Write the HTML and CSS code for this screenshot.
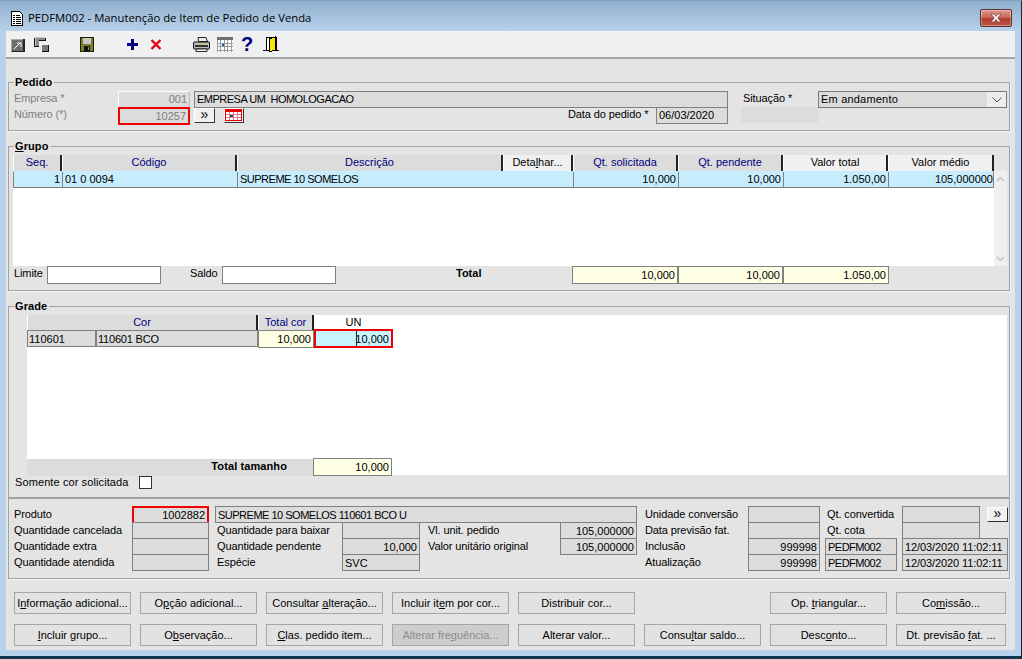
FILE: index.html
```html
<!DOCTYPE html>
<html lang="pt">
<head>
<meta charset="utf-8">
<title>PEDFM002</title>
<link rel="stylesheet" href="styles.css">
</head>
<body>
<div class="window">
  <header class="titlebar">
    <svg class="title-icon" width="14" height="15" viewBox="0 0 14 15" shape-rendering="crispEdges"><path d="M1.5.5h8l3 3v11h-11z" fill="#fff" stroke="#000"/><path d="M3 4h2v1H3zM6 4h4v1H6zM3 6h2v1H3zM6 6h5v1H6zM3 8h2v1H3zM6 8h5v1H6zM3 10h2v1H3zM6 10h5v1H6zM3 12h2v1H3zM6 12h5v1H6z" fill="#000"/></svg>
    <span class="title-text">PEDFM002 - Manutenção de Item de Pedido de Venda</span>
    <span class="close"><svg width="14" height="10" viewBox="0 0 14 10"><path d="M2 1h3l2 2.500L9 1h3L8.700 5 12 9H9L7 6.500 5 9H2l3.300-4z" fill="#fff" stroke="#6b2a24" stroke-width=".6"/></svg></span>
  </header>
  <div class="client">
    <nav class="toolbar">
      <svg class="ti t1" width="14" height="14" viewBox="0 0 14 14" shape-rendering="crispEdges"><path d="M0 1h13v13H0z" fill="#6f6f6f"/><path d="M0 1h12v1H1v11H0z" fill="#a8a8a8"/><path d="M12 1h2v13H1v-1h11z" fill="#222"/><path d="M3 11l6-6M6 5h4v4" stroke="#fff" fill="none" stroke-width="1" shape-rendering="auto"/></svg>
      <svg class="ti t2" width="15" height="15" viewBox="0 0 15 15" shape-rendering="crispEdges"><path d="M1 0h10v4H5v6H1z" fill="#8a8a8a"/><path d="M1 0h10v1H2v9H1z" fill="#c4c4c4"/><path d="M5 4h7V1h-1v2H5zM0 10h5V9H1V1H0z" fill="#111"/><path d="M8 8h6v6H8z" fill="#777"/><path d="M14 8h1v7H8v-1h6z" fill="#111"/></svg>
      <svg class="ti t3" width="14" height="15" viewBox="0 0 14 15" shape-rendering="crispEdges"><path d="M0 0h14v15H0z" fill="#1d1d00"/><path d="M1 1h12v13H1z" fill="#7d7d2a"/><path d="M3 1h8v6H3z" fill="#c8c8c8"/><path d="M4 9h6v5H4z" fill="#111"/><path d="M8 10h1v3H8z" fill="#999"/></svg>
      <svg class="ti t4" width="11" height="11" viewBox="0 0 11 11" shape-rendering="crispEdges"><path d="M4 0h3v4h4v3H7v4H4V7H0V4h4z" fill="#000080"/></svg>
      <svg class="ti t5" width="12" height="11" viewBox="0 0 12 11"><path d="M1.500 1l9 9M10.500 1l-9 9" stroke="#e3000f" stroke-width="2.400" fill="none"/></svg>
      <svg class="ti t6" width="17" height="15" viewBox="0 0 17 15"><path d="M5 .5h8l1.500 4h-9z" fill="#eee" stroke="#222"/><path d="M1 5h15a.5.500 0 0 1 .5.500V11a1 1 0 0 1-1 1H1.500a1 1 0 0 1-1-1V6z" fill="#bdbdbd" stroke="#111"/><path d="M2 8h13v2H2z" fill="#333"/><path d="M3 12h11v2.500H3z" fill="#fff" stroke="#222"/><path d="M8 6h3v1H8z" fill="#d8d800"/></svg>
      <svg class="ti t7" width="16" height="15" viewBox="0 0 16 15" shape-rendering="crispEdges"><path d="M0 0h16v3H0z" fill="#6f6f6f"/><path d="M0 3h16v12H0z" fill="#fff"/><path d="M0 3v12M3.500 3v12M7 3v12M10.500 3v12M14 3v12M0 6h16M0 9.500h16M0 13h16" stroke="#9a9a9a" fill="none"/><path d="M5 7h2v2H5z" fill="#0a5aa8"/></svg>
      <span class="ti help">?</span>
      <svg class="ti t9" width="16" height="17" viewBox="0 0 16 17" shape-rendering="crispEdges"><path d="M3 1h10v13H3z" fill="#fff" stroke="#000" stroke-width="1"/><path d="M6 3l6-2v13l-6 2z" fill="#f7e600" stroke="#000"/><path d="M0 14h6v1H0zM12 14h4v1h-4z" fill="#000"/></svg>
    </nav>

    <section class="group pedido">
      <span class="legend">Pedido</span>
      <div class="pedido-grid">
        <span class="lbl dim">Empresa *</span>
        <span class="f soft dim r">001</span>
        <span class="f desc-emp caps">EMPRESA UM&nbsp; HOMOLOGACAO</span>
        <span class="lbl sit">Situação *</span>
        <span class="f select">Em andamento<span class="chev"><svg width="10" height="6" viewBox="0 0 10 6"><path d="M.5.500L5 5 9.500.500" stroke="#555" fill="none"/></svg></span></span>

        <span class="lbl dim">Número (*)</span>
        <span class="f red dim r">10257</span>
        <button class="mini c-more" type="button">»</button>
        <button class="mini c-cal" type="button" aria-label="Calendário"><svg width="17" height="12" viewBox="0 0 17 12" shape-rendering="crispEdges"><path d="M0 0h17v12H0z" fill="#f00000"/><path d="M1 3h15v8H1z" fill="#fff"/><path d="M4.500 3v8M8.500 3v8M12.500 3v8M1 5.500h15M1 8.500h15" stroke="#e08080"/><path d="M5 6h3v2H5z" fill="#0a5aa8"/></svg></button>
        <span class="lbl c-data">Data do pedido *</span>
        <span class="f c-date">06/03/2020</span>
        <span class="blank c-blank"></span>
      </div>
    </section>

    <section class="group grupo">
      <span class="legend"><u>G</u>rupo</span>
      <div class="g-cols g-head">
        <span class="h req">Seq.</span>
        <span class="h req">Código</span>
        <span class="h req">Descrição</span>
        <span class="h">Deta<u>l</u>har...</span>
        <span class="h req">Qt. solicitada</span>
        <span class="h req">Qt. pendente</span>
        <span class="h">Valor total</span>
        <span class="h">Valor médio</span>
      </div>
      <div class="g-body">
        <div class="g-rows">
          <div class="g-cols g-row">
            <span class="r">1</span>
            <span>01 0 0094</span>
            <span class="nb caps">SUPREME 10 SOMELOS</span>
            <span></span>
            <span class="r">10,000</span>
            <span class="r">10,000</span>
            <span class="r">1.050,00</span>
            <span class="r">105,000000</span>
          </div>
        </div>
        <div class="scroll">
          <svg width="9" height="6" viewBox="0 0 9 6"><path d="M1 5l3.500-3.500L8 5" stroke="#c2c2c2" stroke-width="1.500" fill="none"/></svg>
          <svg width="9" height="6" viewBox="0 0 9 6"><path d="M1 1l3.500 3.500L8 1" stroke="#c2c2c2" stroke-width="1.500" fill="none"/></svg>
        </div>
      </div>
      <div class="g-foot">
        <span class="lbl">Limite</span>
        <span class="f white"></span>
        <span></span>
        <span class="lbl">Saldo</span>
        <span class="f white"></span>
        <span></span>
        <b class="total-lbl">Total</b>
        <span class="f ivory r">10,000</span>
        <span class="f ivory r">10,000</span>
        <span class="f ivory r">1.050,00</span>
      </div>
    </section>

    <section class="group grade">
      <span class="legend">Grade</span>
      <div class="canvas">
        <div class="gr-cols gr-head">
          <span class="h req">Cor</span>
          <span class="h req">Total cor</span>
          <span class="h plain">UN</span>
        </div>
        <div class="gr-cols gr-row">
          <span class="gr-split"><span class="f">110601</span><span class="f caps-lt">110601 BCO</span></span>
          <span class="f ivory r">10,000</span>
          <span class="f red-cell r">10,000<i class="caret"></i></span>
        </div>
        <div class="gr-cols gr-total">
          <b class="tt-lbl">Total tamanho</b>
          <span class="f ivory r tt-val">10,000</span>
        </div>
      </div>
      <div class="somente">
        <span class="lbl">Somente cor solicitada</span>
        <span class="check"></span>
      </div>
    </section>

    <section class="group produto">
      <span class="lbl ca">Produto</span>
      <span class="f red cb r">1002882</span>
      <span class="f cdesc caps">SUPREME 10 SOMELOS 110601 BCO U</span>
      <span class="lbl ch">Unidade conversão</span>
      <span class="f ci"></span>
      <span class="lbl cj pl">Qt. convertida</span>
      <span class="f ck"></span>
      <button class="mini cl" type="button">»</button>

      <span class="lbl ca">Quantidade cancelada</span>
      <span class="f cb"></span>
      <span class="lbl cd">Quantidade para baixar</span>
      <span class="f ce"></span>
      <span class="lbl cf">Vl. unit. pedido</span>
      <span class="f cg r">105,000000</span>
      <span class="lbl ch">Data previsão fat.</span>
      <span class="f ci"></span>
      <span class="lbl cj pl">Qt. cota</span>
      <span class="f ck"></span>

      <span class="lbl ca">Quantidade extra</span>
      <span class="f cb"></span>
      <span class="lbl cd">Quantidade pendente</span>
      <span class="f ce r">10,000</span>
      <span class="lbl cf">Valor unitário original</span>
      <span class="f cg r">105,000000</span>
      <span class="lbl ch">Inclusão</span>
      <span class="f ci r">999998</span>
      <span class="f cj caps">PEDFM002</span>
      <span class="f ckm stamp">12/03/2020 11:02:11</span>

      <span class="lbl ca">Quantidade atendida</span>
      <span class="f cb"></span>
      <span class="lbl cd">Espécie</span>
      <span class="f ce">SVC</span>
      <span class="lbl ch">Atualização</span>
      <span class="f ci r">999998</span>
      <span class="f cj caps">PEDFM002</span>
      <span class="f ckm stamp">12/03/2020 11:02:11</span>
    </section>

    <div class="actions">
      <button class="btn" type="button">I<u>n</u>formação adicional...</button>
      <button class="btn" type="button">O<u>p</u>ção adicional...</button>
      <button class="btn" type="button">Consultar <u>a</u>lteração...</button>
      <button class="btn" type="button">Incluir it<u>e</u>m por cor...</button>
      <button class="btn" type="button">Distribuir cor...</button>
      <span></span>
      <button class="btn" type="button">Op. <u>t</u>riangular...</button>
      <button class="btn" type="button">Co<u>m</u>issão...</button>

      <button class="btn" type="button"><u>I</u>ncluir <u>g</u>rupo...</button>
      <button class="btn" type="button">O<u>b</u>servação...</button>
      <button class="btn" type="button"><u>C</u>las. pedido item...</button>
      <button class="btn off" type="button">Alterar fre<u>q</u>uência...</button>
      <button class="btn" type="button">Alterar valor...</button>
      <button class="btn" type="button">Consu<u>l</u>tar saldo...</button>
      <button class="btn" type="button">Desc<u>o</u>nto...</button>
      <button class="btn" type="button">Dt. previsão <u>f</u>at. ...</button>
    </div>
  </div>
</div>
</body>
</html>
```

FILE: styles.css
```css
* { box-sizing: border-box; }
html, body { margin: 0; padding: 0; }
body {
  width: 1022px;
  height: 659px;
  overflow: hidden;
  font: 11px/15px "Liberation Sans", Arial, sans-serif;
  color: #000;
  background: #b9d1ea;
}
u { text-decoration: underline; }

.window {
  width: 1022px;
  height: 659px;
  display: flex;
  flex-direction: column;
  background: #b9d1ea;
  border-right: 1px solid #0f2a3a;
  border-bottom: 3px solid #12394f;
  border-top: 1px solid #7fa3c4;
}

/* title bar */
.titlebar {
  height: 30px;
  flex: none;
  display: flex;
  align-items: flex-start;
  padding: 8px 9px 0 9px;
  background: linear-gradient(#8fafcd, #b9d1ea);
}
.title-icon { margin: 2px 4px 0 1px; flex: none; }
.title-text {
  font: 11.3px/16px "Open Sans", sans-serif;
  color: #000;
  flex: 1;
  margin-top: 1px;
}
.close {
  width: 32px;
  height: 18px;
  display: flex;
  align-items: center;
  justify-content: center;
  background: linear-gradient(#dc9a90 0, #c7675b 45%, #b23a2c 55%, #c05a4a 100%);
  border: 1px solid #5b3330;
  border-radius: 2px;
  box-shadow: inset 0 0 0 1px rgba(255,255,255,.3);
}

/* client */
.client {
  margin: 0 6px;
  width: 1009px;
  height: 619px;
  flex: none;
  background: #e4e4e4;
  display: flex;
  flex-direction: column;
  padding-left: 2px;
}
.toolbar {
  height: 28px;
  margin-left: -2px;
  flex: none;
  display: flex;
  align-items: center;
  background: #f0f0f0;
  border-bottom: 2px solid #a4a4a4;
  padding-left: 5px;
}
.ti { flex: none; display: block; }
.t1 { margin-top: 2px; }
.t2 { margin-left: 9px; }
.t3 { margin-left: 31px; }
.t4 { margin-left: 33px; }
.t5 { margin-left: 12px; }
.t6 { margin-left: 31px; }
.t7 { margin-left: 7px; }
.help {
  margin-left: 8px;
  width: 12px;
  font: 700 20px/20px "Liberation Sans", sans-serif;
  color: #000080;
}
.t9 { margin-left: 10px; }

/* group boxes */
.group {
  position: relative;
  width: 1002px;
  border: 1px solid #a2a2a2;
  box-shadow: 1px 1px 0 #f4f4f4;
  flex: none;
}
.legend {
  position: absolute;
  left: 5px;
  top: -8px;
  padding: 0 2px 0 1px;
  background: #e4e4e4;
  font-weight: 700;
  letter-spacing: .1px;
}
.pedido { margin-top: 23px; height: 49px; padding: 8px 0 0 5px; }
.grupo { margin-top: 15px; height: 145px; padding: 8px 0 0 4px; }
.grade { margin-top: 15px; height: 192px; padding: 8px 0 0 0; }
.produto {
  height: 81px;
  padding: 7px 0 0 5px;
  display: grid;
  grid-auto-rows: 16px;
  grid-template-columns:
    [a] 118px [b] 77px 6px [c] 2px [d] 125px [e] 78px 8px
    [f] 132px [g] 77px [gend] 8px [h] 103px [i] 72px 5px
    [j] 72px 5px [k] 78px 7px [l] 21px [m];
}
.produto .lbl { padding-top: 1px; }

/* generic fields */
.lbl { line-height: 15px; white-space: nowrap; letter-spacing: -.1px; }
.dim { color: #808080; }
.f {
  display: block;
  height: 17px;
  padding: 1px 2px 0;
  line-height: 14px;
  background: #dcdcdc;
  border: 1px solid #808080;
  white-space: nowrap;
  overflow: hidden;
  position: relative;
}
.r { text-align: right; }
.caps { letter-spacing: -.5px; }
.caps-lt { letter-spacing: -.2px; }
.stamp { letter-spacing: -.1px; }
.soft { border-color: #fff #bdbdbd #bdbdbd #fff; }
.white { background: #fff; height: 18px; }
.ivory { background: #ffffe6; height: 18px; }
.red { border: 2px solid #f00000; height: 18px; line-height: 13px; padding-top: 1px; }
.blank { background: #dcdcdc; height: 16px; }

.mini {
  margin: 0;
  padding: 0 0 2px;
  width: 21px;
  height: 15px;
  font: 400 14px/11px "Liberation Sans", sans-serif;
  background: #f0f0f0;
  border: 1px solid;
  border-color: #fff #333 #333 #fff;
  color: #000;
  display: flex;
  align-items: center;
  justify-content: center;
}

/* pedido */
.pedido-grid {
  display: grid;
  grid-template-columns: 104px 72px 4px 22px 8px 20px 324px 88px 72px 13px 77px 189px;
  grid-template-rows: 16px 17px;
}
.pedido-grid .f { padding-top: 0; }
.pedido-grid .red { padding-top: 1px; }
.desc-emp { grid-column: 4 / 10; }
.sit { grid-column: 11; padding-left: 2px; }
.select { grid-column: 12; padding-right: 17px; border-color: #777; letter-spacing: .2px; }
.chev {
  position: absolute;
  right: 0;
  top: 0;
  bottom: 0;
  width: 19px;
  background: #ededed;
  display: flex;
  align-items: center;
  justify-content: center;
}
.c-more { grid-column: 4; grid-row: 2; margin-top: 1px; }
.c-cal {
  grid-column: 6;
  grid-row: 2;
  margin-top: 1px;
  width: 20px;
  padding: 0;
  align-items: flex-start;
  justify-content: flex-start;
}
.c-data { grid-column: 8; grid-row: 2; }
.c-date { grid-column: 9; grid-row: 2; }
.c-blank { grid-column: 11; grid-row: 2; }

/* grupo table */
.g-cols {
  display: grid;
  grid-template-columns: 49px 175px 266px 70px 105px 105px 105px 106px;
}
.g-head { height: 16px; width: 981px; }
.h {
  display: block;
  height: 16px;
  line-height: 15px;
  text-align: center;
  background: #f0f0f0;
  border-left: 1px solid #fff;
  border-right: 2px solid #222;
}
.req { background: #dcdcdc; color: #000080; }
.plain { background: #fff; border: 0; }
.g-body { display: flex; height: 95px; width: 994px; }
.g-rows { width: 981px; background: #fff; }
.g-row {
  height: 17px;
  background: #c6ecfd;
  border: 1px solid #808080;
  border-top-color: #c6ecfd;
}
.g-row span {
  padding: 0 2px;
  line-height: 15px;
  white-space: nowrap;
  border-right: 1px solid #808080;
}
.g-row span:last-child,
.g-row .nb { border-right: 0; }
.scroll {
  width: 13px;
  background: #efefef;
  display: flex;
  flex-direction: column;
  justify-content: space-between;
  align-items: center;
  padding: 5px 0 4px;
}
.g-foot {
  display: grid;
  width: 880px;
  grid-template-columns: 34px 114px 29px 32px 114px 120px 116px 106px 105px 106px;
}
.g-foot > .lbl:first-child { padding-left: 1px; }
.total-lbl { line-height: 14px; }

/* grade */
.canvas {
  margin-left: 18px;
  width: 980px;
  height: 160px;
  background: #fff;
  display: flex;
  flex-direction: column;
}
.gr-cols { display: grid; grid-template-columns: 231px 56px 79px; }
.gr-head { height: 15px; }
.gr-head .h { height: 15px; line-height: 15px; }
.gr-row { height: 17px; }
.gr-split { display: grid; grid-template-columns: 69px 162px; }
.gr-split .f { padding-left: 1px; }
.red-cell {
  height: 19px;
  margin-top: -1px;
  width: 79px;
  background: #c6f4ff;
  border: 2px solid #f00000;
  line-height: 14px;
  padding-top: 1px;
}
.caret {
  position: absolute;
  left: 40px;
  top: 0;
  width: 1px;
  height: 15px;
  background: #222;
}
.gr-total { margin-top: auto; height: 16px; grid-template-columns: 286px 79px; }
.tt-lbl {
  background: #dcdcdc;
  text-align: right;
  padding-right: 26px;
  letter-spacing: .1px;
  line-height: 15px;
}
.tt-val { margin-top: -1px; height: 18px; }
.somente {
  display: flex;
  align-items: flex-start;
  padding-left: 6px;
  height: 15px;
}
.somente .lbl { width: 124px; letter-spacing: .1px; }
.check {
  display: block;
  width: 13px;
  height: 13px;
  margin-top: 1px;
  background: #fff;
  border: 1px solid #333;
}

/* produto */
.ca { grid-column: a; }
.cb { grid-column: b; }
.cdesc { grid-column: c / gend; }
.cd { grid-column: d; }
.ce { grid-column: e; }
.cf { grid-column: f; }
.cg { grid-column: g; }
.ch { grid-column: h; }
.ci { grid-column: i; }
.cj { grid-column: j; }
.ck { grid-column: k; }
.cl { grid-column: l; margin-top: 1px; }
.ckm { grid-column: k / m; }
.pl { padding-left: 2px; }

/* bottom buttons */
.actions {
  margin-top: 13px;
  margin-left: 6px;
  display: grid;
  grid-template-columns: repeat(7, 117px) 110px;
  grid-auto-rows: 22px;
  column-gap: 9px;
  row-gap: 10px;
  width: 992px;
}
.btn {
  margin: 0;
  padding: 0;
  height: 22px;
  font: 11px/14px "Liberation Sans", sans-serif;
  color: #000;
  background: #e2e2e2;
  border: 1px solid #a6a6a6;
  white-space: nowrap;
}
.off { background: #cdcdcd; color: #8c8c8c; }
```
